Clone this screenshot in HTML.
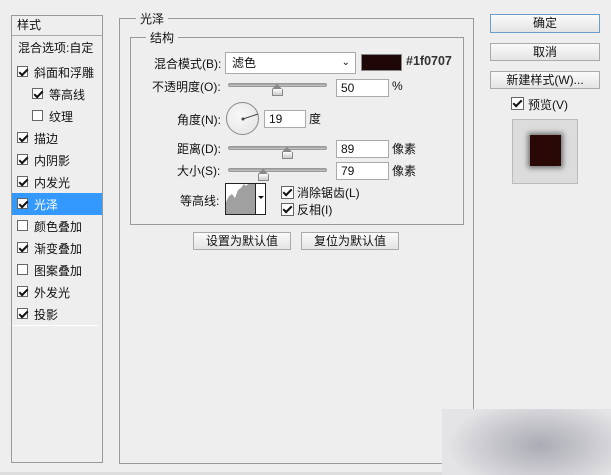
<!DOCTYPE html>
<html><head><meta charset="utf-8"><style>
*{margin:0;padding:0;box-sizing:border-box}
body{width:611px;height:475px;background:#eeeeee;position:relative;overflow:hidden;font-family:"Liberation Sans","Noto Sans CJK SC",sans-serif;font-size:12px;color:#111}
.a{position:absolute;white-space:nowrap}
.box{position:absolute;border:1px solid #9a9a9a}
.cb{position:absolute;width:11px;height:11px;border:1px solid #666;background:#fff}
.cb.on::after{content:"";position:absolute;left:3px;top:0px;width:3px;height:7px;border:solid #111;border-width:0 2px 2px 0;transform:rotate(45deg)}
.row{position:absolute;left:12px;width:90px;height:22px}
.row .cb{left:5px;top:5px}
.row span{position:absolute;left:22px;top:3px}
.in{position:absolute;background:#fff;border:1px solid #aaa;padding-left:4px;font-size:12px;line-height:16px}
.trk{position:absolute;height:4px;border-radius:2px;background:linear-gradient(#999,#ccc);border:1px solid #999}
.th{position:absolute;width:11px;height:7px;background:linear-gradient(#fff,#ccc);border:1px solid #888;border-top:none}
.th::before{content:"";position:absolute;left:-1px;top:-5px;width:0;height:0;border-left:5.5px solid transparent;border-right:5.5px solid transparent;border-bottom:5px solid #888}
.btn{position:absolute;border:1px solid #aaa;background:linear-gradient(#fafafa,#e4e4e4);text-align:center;line-height:16px}
</style></head><body>
<div class="box" style="left:11px;top:15px;width:92px;height:448px"></div>
<div class="a" style="left:17px;top:16px">样式</div>
<div class="a" style="left:12px;top:35px;width:90px;border-top:1px solid #aaa"></div>
<div class="a" style="left:18px;top:39px">混合选项:自定</div>
<div class="row" style="top:61px"><div class="cb on"></div><span>斜面和浮雕</span></div>
<div class="row" style="top:83px"><div class="cb on" style="left:20px"></div><span style="left:37px">等高线</span></div>
<div class="row" style="top:105px"><div class="cb" style="left:20px"></div><span style="left:37px">纹理</span></div>
<div class="row" style="top:127px"><div class="cb on"></div><span>描边</span></div>
<div class="row" style="top:149px"><div class="cb on"></div><span>内阴影</span></div>
<div class="row" style="top:171px"><div class="cb on"></div><span>内发光</span></div>
<div class="row" style="top:193px;background:#3399ff"><div class="cb on"></div><span style="color:#fff">光泽</span></div>
<div class="row" style="top:215px"><div class="cb"></div><span>颜色叠加</span></div>
<div class="row" style="top:237px"><div class="cb on"></div><span>渐变叠加</span></div>
<div class="row" style="top:259px"><div class="cb"></div><span>图案叠加</span></div>
<div class="row" style="top:281px"><div class="cb on"></div><span>外发光</span></div>
<div class="row" style="top:303px"><div class="cb on"></div><span>投影</span></div>
<div class="a" style="left:12px;top:325px;width:86px;border-top:1px solid #fff"></div>

<div class="box" style="left:119px;top:18px;width:355px;height:446px"></div>
<div class="a" style="left:136px;top:10px;background:#eee;padding:0 4px">光泽</div>
<div class="box" style="left:130px;top:37px;width:334px;height:188px"></div>
<div class="a" style="left:146px;top:29px;background:#eee;padding:0 4px">结构</div>

<div class="a" style="left:154px;top:55px">混合模式(B):</div>
<div class="in" style="left:225px;top:52px;width:131px;height:22px;line-height:20px;padding-left:6px">滤色<span style="position:absolute;right:5px;top:0;font-size:10px">⌄</span></div>
<div class="a" style="left:361px;top:54px;width:41px;height:17px;background:#1f0707;border:1px solid #888"></div>
<div class="a" style="left:406px;top:54px;font-weight:bold;font-size:12.5px;color:#333">#1f0707</div>

<div class="a" style="left:152px;top:78px">不透明度(O):</div>
<div class="trk" style="left:228px;top:83px;width:99px"></div>
<div class="th" style="left:272px;top:89px"></div>
<div class="in" style="left:336px;top:79px;width:53px;height:18px">50</div>
<div class="a" style="left:392px;top:79px">%</div>

<div class="a" style="left:177px;top:111px">角度(N):</div>
<div class="a" style="left:226px;top:102px;width:33px;height:33px;border:1px solid #888;border-radius:50%;background:radial-gradient(circle at 40% 40%,#f8f8f8,#e2e2e2)"></div>
<svg class="a" style="left:226px;top:102px" width="34" height="34"><circle cx="17" cy="17" r="1.5" fill="#444"/><line x1="17" y1="17" x2="32" y2="12" stroke="#444" stroke-width="1"/></svg>
<div class="in" style="left:264px;top:110px;width:42px;height:18px">19</div>
<div class="a" style="left:309px;top:110px">度</div>

<div class="a" style="left:177px;top:140px">距离(D):</div>
<div class="trk" style="left:228px;top:146px;width:99px"></div>
<div class="th" style="left:282px;top:152px"></div>
<div class="in" style="left:336px;top:140px;width:53px;height:18px">89</div>
<div class="a" style="left:392px;top:140px">像素</div>

<div class="a" style="left:177px;top:162px">大小(S):</div>
<div class="trk" style="left:228px;top:168px;width:99px"></div>
<div class="th" style="left:258px;top:174px"></div>
<div class="in" style="left:336px;top:162px;width:53px;height:18px">79</div>
<div class="a" style="left:392px;top:162px">像素</div>

<div class="a" style="left:180px;top:192px">等高线:</div>
<div class="a" style="left:225px;top:183px;width:41px;height:32px;border:1px solid #222;background:#fff"></div>
<svg class="a" style="left:226px;top:184px" width="30" height="30"><path d="M0 30 L0 18 L3 12 L6 10 L9 14 L12 6 L15 4 L18 0 L20 2 L22 0 L30 0 L30 30Z" fill="#a0a0a0"/></svg>
<div class="a" style="left:255px;top:184px;width:1px;height:30px;background:#222"></div>
<div class="a" style="left:258px;top:196px;border-left:3px solid transparent;border-right:3px solid transparent;border-top:3px solid #111"></div>
<div class="cb on" style="left:281px;top:186px;width:13px;height:13px"></div>
<div class="a" style="left:297px;top:184px">消除锯齿(L)</div>
<div class="cb on" style="left:281px;top:203px;width:13px;height:13px"></div>
<div class="a" style="left:297px;top:201px">反相(I)</div>

<div class="btn" style="left:193px;top:232px;width:98px;height:18px">设置为默认值</div>
<div class="btn" style="left:301px;top:232px;width:98px;height:18px">复位为默认值</div>

<div class="btn" style="left:490px;top:14px;width:110px;height:19px;border-color:#6a9ec8">确定</div>
<div class="btn" style="left:490px;top:43px;width:110px;height:18px">取消</div>
<div class="btn" style="left:490px;top:71px;width:110px;height:18px">新建样式(W)...</div>
<div class="cb on" style="left:511px;top:97px;width:13px;height:13px"></div>
<div class="a" style="left:528px;top:96px">预览(V)</div>
<div class="a" style="left:512px;top:119px;width:66px;height:65px;border:1px solid #bbb;background:#dcdcdc"></div>
<div class="a" style="left:530px;top:135px;width:31px;height:31px;background:#2a0806;box-shadow:0 0 5px 2px rgba(0,0,0,.5)"></div>

<div class="a" style="left:442px;top:409px;width:169px;height:66px;background:radial-gradient(ellipse 55% 70% at 58% 55%,#acacb6,#c6c6cc 50%,#e4e4e6)"></div>
<div class="a" style="left:0;top:472px;width:442px;height:3px;background:#dcdcdc"></div>
</body></html>
